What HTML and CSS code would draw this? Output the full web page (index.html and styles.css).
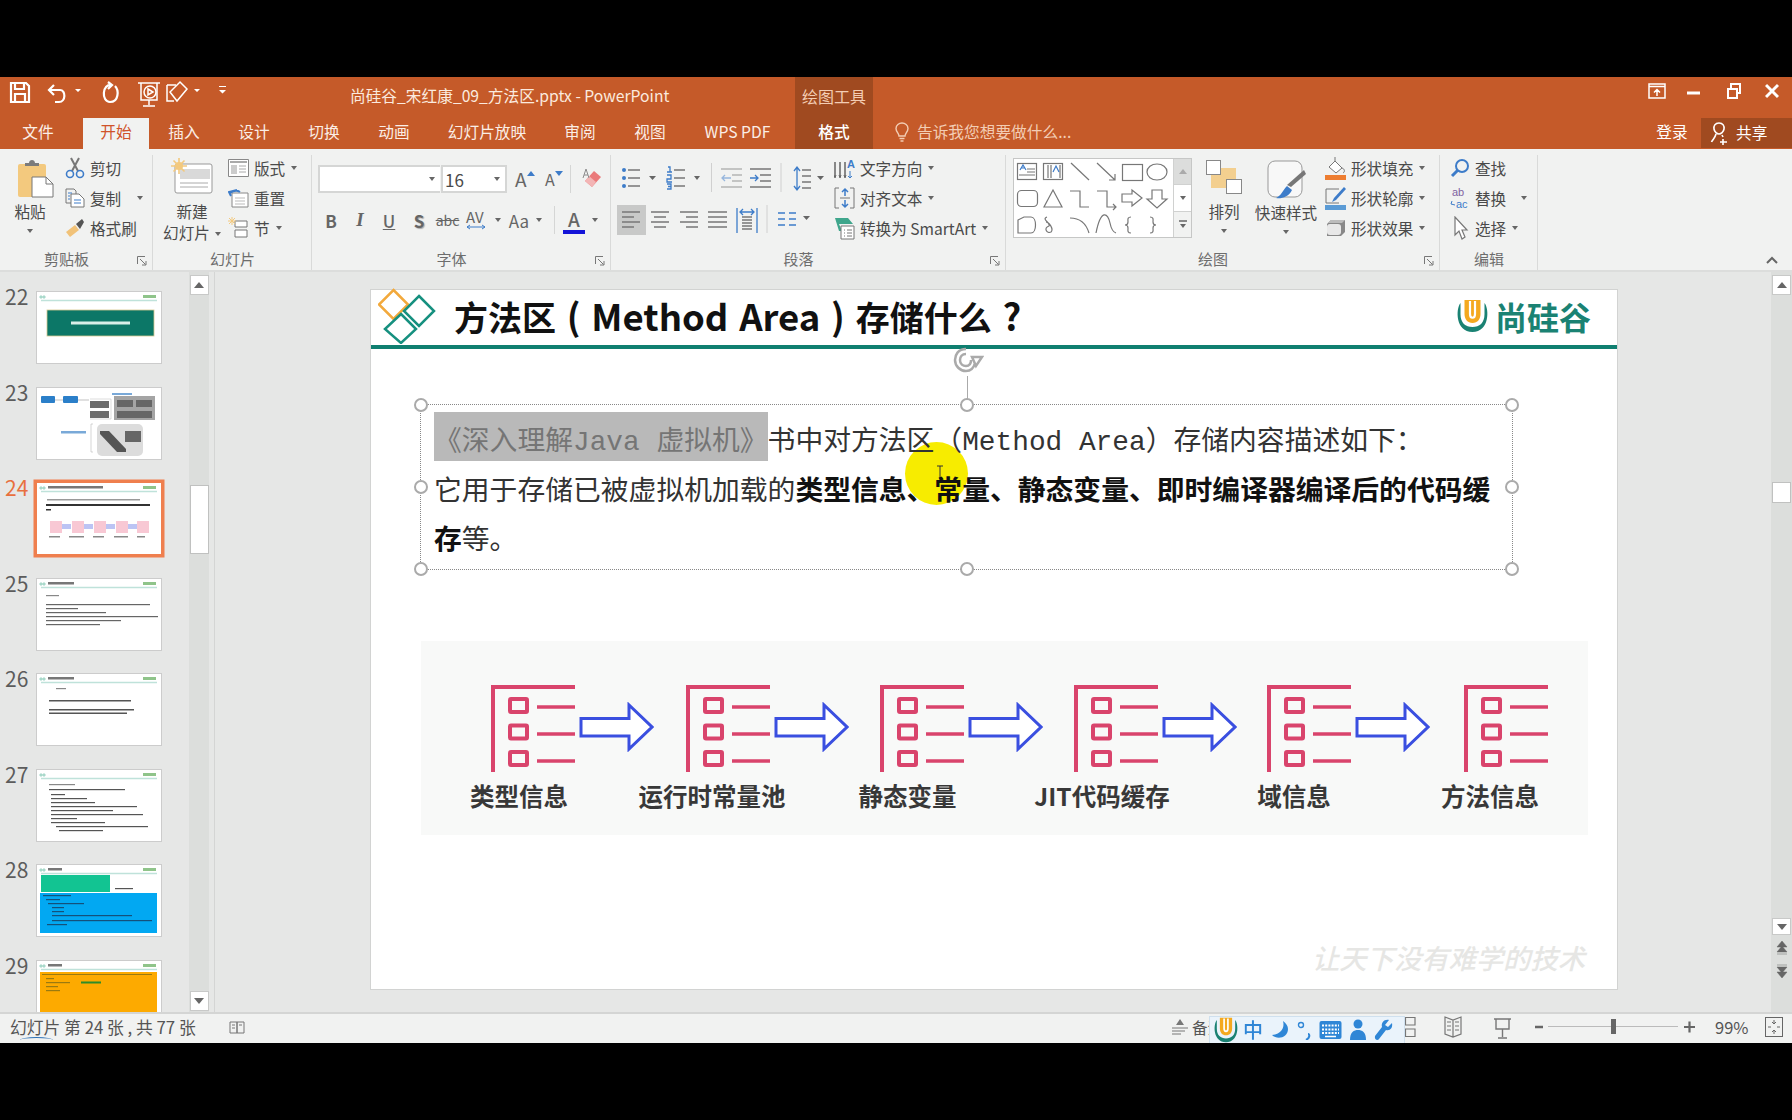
FILE: index.html
```html
<!DOCTYPE html>
<html lang="zh-CN">
<head>
<meta charset="utf-8">
<title>尚硅谷_宋红康_09_方法区.pptx - PowerPoint</title>
<link rel="stylesheet" href="styles.css">
</head>
<body>
<svg class="defs" width="0" height="0">
  <symbol id="list" viewBox="0 0 84 88">
    <path d="M2 88V3H84" fill="none" stroke="#d9446c" stroke-width="4"/>
    <g fill="none" stroke="#d9446c" stroke-width="4">
      <rect x="19" y="15" width="17" height="13" rx="1"/>
      <rect x="19" y="41.5" width="17" height="13" rx="1"/>
      <rect x="19" y="68" width="17" height="13" rx="1"/>
    </g>
    <path d="M46 23H84M46 50H84M46 77H84" stroke="#d9446c" stroke-width="3.5"/>
  </symbol>
  <symbol id="arrow" viewBox="0 0 75 50">
    <path d="M2 16.500H50V3L73 25L50 47V34H2Z" fill="#fff" stroke="#3a4fe0" stroke-width="3"/>
  </symbol>
  <symbol id="ulogo" viewBox="0 0 34 34">
    <path d="M5 4C0 10 0 33 17 33C34 33 34 10 29 4V15C29 24 24 28 17 28C10 28 5 24 5 15Z" fill="#1a8273"/>
    <path d="M9 1H25V15C25 20 22 24 17 24C12 24 9 20 9 15Z" fill="#f4a91f"/>
    <path d="M14.500 2V15C14.500 20 19.500 20 19.500 15V2" fill="none" stroke="#fff" stroke-width="2.200"/>
  </symbol>
  <symbol id="thead" viewBox="0 0 124 71">
    <path d="M4 8.500H120" stroke="#bfe2da" stroke-width="1.500"/>
    <path d="M4 3l2 2-2 2-2-2zM7 3l2 2-2 2-2-2z" fill="#a9d9cb"/>
    <rect x="106" y="3" width="13" height="3" fill="#8fc48a"/>
  </symbol>
  <symbol id="launch" viewBox="0 0 10 10">
    <path d="M.5 8V.5H8M3 3l5.500 5.500M9 5v4H5" fill="none" stroke="#777" stroke-width="1"/>
  </symbol>
</svg>

<div class="app">
  <header class="titlebar">
    <svg class="qat" width="350" height="41" viewBox="0 0 350 41">
      <g fill="none" stroke="#fff" stroke-width="2.200">
        <path d="M11 6H26L29 9V25H11ZM15 6V12H24V6M15 25V17H25V25"/>
        <path d="M54 8L49 13L54 18M50 13H60C66 13 66 25 59 25H55"/>
        <path d="M112 8C102 6 101 25 110 25C119 25 119 13 115 9M108 5L112 8L108 12"/>
        <g stroke-width="1.500">
          <path d="M138 6H160M141 6V23H157V6M149 23V28M143 29H155"/>
          <circle cx="150" cy="15" r="6"/>
          <path d="M148 12L153 15L148 18Z"/>
          <path d="M167 8H176M167 8V24H174"/>
          <path d="M180 5L187 12L177 24L170 15Z"/>
        </g>
      </g>
      <path d="M75 12H81L78 15ZM194 12H200L197 15ZM219 13H226L222.500 16.500ZM219 9H226V10H219Z" fill="#fff"/>
    </svg>
    <div class="doctitle">尚硅谷_宋红康_09_方法区.pptx - PowerPoint</div>
    <div class="ctx-head">绘图工具</div>
    <div class="winbtns">
      <svg width="18" height="16" viewBox="0 0 18 16"><path d="M1 1H17V15H1ZM1 3.500H17M9 13V7M6 9.500L9 6.500L12 9.500" fill="none" stroke="#fff" stroke-width="1.500"/></svg>
      <svg class="w-min" width="13" height="16" viewBox="0 0 13 16"><path d="M0 10H13" stroke="#fff" stroke-width="3"/></svg>
      <svg class="w-res" width="14" height="16" viewBox="0 0 14 16"><path d="M1 6H10V15H1ZM4 5V1H13V10H10" fill="none" stroke="#fff" stroke-width="2"/></svg>
      <svg class="w-close" width="14" height="16" viewBox="0 0 14 16"><path d="M1 2L13 14M13 2L1 14" stroke="#fff" stroke-width="3"/></svg>
    </div>
  </header>

  <nav class="tabs">
    <span class="tab t-file">文件</span>
    <span class="tab t-active">开始</span>
    <span class="tab">插入</span>
    <span class="tab">设计</span>
    <span class="tab">切换</span>
    <span class="tab">动画</span>
    <span class="tab t-show">幻灯片放映</span>
    <span class="tab">审阅</span>
    <span class="tab">视图</span>
    <span class="tab t-wps">WPS PDF</span>
    <span class="tab t-ctx">格式</span>
    <div class="tellme">
      <svg width="14" height="20" viewBox="0 0 14 20"><path d="M4 14C4 11 1 10 1 6.500C1 3 4 1 7 1C10 1 13 3 13 6.500C13 10 10 11 10 14ZM4.500 16.500H9.500M5.500 19H8.500" fill="none" stroke="#f3cdb4" stroke-width="1.400"/></svg>
      <span>告诉我您想要做什么...</span>
    </div>
    <span class="signin">登录</span>
    <div class="share">
      <svg width="20" height="24" viewBox="0 0 20 24"><path d="M9 2C13 2 14.500 5 14 8C13.500 11 11 13 9 13C7 13 4.500 11 4 8C3.500 5 5 2 9 2ZM6 13C5 17 3 18 1.500 21M12 14L13 16M13 18V24M10 21H17" fill="none" stroke="#fff" stroke-width="1.600"/></svg>
      <span>共享</span>
    </div>
  </nav>

  <section class="ribbon">
    <div class="group g-clip">
      <div class="gbody">
        <div class="big b-paste">
          <svg width="36" height="39" viewBox="0 0 36 39">
            <rect x="0" y="5" width="28" height="33" rx="2" fill="#f3c97e"/>
            <path d="M7 7V4H11C11 0 17 0 17 4H21V7Z" fill="#7b7b7b"/>
            <path d="M14 18H28L35 25V38H14Z" fill="#fff" stroke="#777"/>
            <path d="M28 18V25H35" fill="none" stroke="#777"/>
          </svg>
          <span class="biglabel bl-paste">粘贴</span>
          <i class="dd"></i>
        </div>
        <div class="stack s-clip">
          <div class="rrow">
            <svg width="20" height="22" viewBox="0 0 20 22"><path d="M6 1L13 14M14 1L7 14" stroke="#777" stroke-width="2"/><circle cx="5" cy="17" r="3.500" fill="none" stroke="#3d7cc9" stroke-width="1.600"/><circle cx="15" cy="17" r="3.500" fill="none" stroke="#3d7cc9" stroke-width="1.600"/></svg>
            <span>剪切</span>
          </div>
          <div class="rrow">
            <svg width="20" height="20" viewBox="0 0 20 20"><path d="M1 1H9L11 3V6M1 1V15H6" fill="none" stroke="#777"/><path d="M6 6H14L19 11V19H6Z" fill="#fff" stroke="#777"/><path d="M3 5H7M3 8H5M3 11H5M9 12H16M9 15H16" stroke="#3d7cc9"/></svg>
            <span>复制</span><i class="dd dd-copy"></i>
          </div>
          <div class="rrow">
            <svg width="20" height="20" viewBox="0 0 20 20"><path d="M1 14L10 7L14 12L5 19Z" fill="#f1c278"/><path d="M11 6L17 1L19 4L15 11Z" fill="#555"/></svg>
            <span>格式刷</span>
          </div>
        </div>
      </div>
      <div class="glabel"><span>剪贴板</span><svg class="launch" width="10" height="10"><use href="#launch"/></svg></div>
    </div>

    <div class="group g-slide">
      <div class="gbody">
        <div class="big b-new">
          <svg width="42" height="36" viewBox="0 0 42 36">
            <rect x="4" y="6" width="37" height="29" rx="2" fill="#fff" stroke="#999"/>
            <rect x="9" y="11" width="30" height="10" fill="#d9d9d9"/>
            <path d="M9 25H37M9 29H37" stroke="#aaa"/>
            <path d="M8 0V16M0 8H16M2.500 2.500L13.500 13.500M13.500 2.500L2.500 13.500" stroke="#f3c97e" stroke-width="1.600"/>
            <circle cx="8" cy="8" r="4" fill="#f3c97e"/>
          </svg>
          <span class="biglabel bl-new">新建</span>
          <span class="biglabel">幻灯片<i class="dd dd-in"></i></span>
        </div>
        <div class="stack s-slide">
          <div class="rrow">
            <svg width="21" height="18" viewBox="0 0 21 18"><path d="M.5.500H20.500V17.500H.5Z" fill="#fff" stroke="#888"/><path d="M2 3H19" stroke="#aaa" stroke-width="2"/><rect x="3" y="6" width="6" height="9" fill="#ccc"/><path d="M11 7H18M11 10H18M11 13H18" stroke="#aaa"/></svg>
            <span>版式</span><i class="dd"></i>
          </div>
          <div class="rrow">
            <svg width="21" height="19" viewBox="0 0 21 19"><path d="M4 4H20V18H4Z" fill="#fff" stroke="#888"/><path d="M7 9H17M7 12H17M7 15H17" stroke="#bbb"/><path d="M3 7L1 3L9 1M2 4C5 2 9 1 12 3" fill="none" stroke="#3d7cc9" stroke-width="2"/></svg>
            <span>重置</span>
          </div>
          <div class="rrow">
            <svg width="21" height="22" viewBox="0 0 21 22"><path d="M7 4H19V10H7ZM7 13H19V20H7Z" fill="#fff" stroke="#777"/><path d="M4 0V8M0 4H8M1 1L7 7M7 1L1 7" stroke="#f3c97e"/></svg>
            <span>节</span><i class="dd"></i>
          </div>
        </div>
      </div>
      <div class="glabel"><span>幻灯片</span></div>
    </div>

    <div class="group g-font">
      <div class="gbody col">
        <div class="fontrow1">
          <div class="input in-name"><i class="dd"></i></div>
          <div class="input in-size"><span>16</span><i class="dd"></i></div>
          <span class="grow">A<svg width="8" height="6" viewBox="0 0 8 6"><path d="M0 5L4 0L8 5Z" fill="#3d7cc9"/></svg></span>
          <span class="shrink">A<svg width="8" height="6" viewBox="0 0 8 6"><path d="M0 0L4 5L8 0Z" fill="#3d7cc9"/></svg></span>
          <i class="vsep vs-a"></i>
          <svg class="eraser" width="20" height="24" viewBox="0 0 20 24"><path d="M3 14L12 4L19 10L10 20Z" fill="#ea7a7a"/><path d="M3 14L7 9L14 15L10 20Z" fill="#f3b5b5"/><path d="M1 11L4 2L7 11M2 8H6" fill="none" stroke="#8c8c8c"/></svg>
        </div>
        <div class="fontrow2">
          <b class="fb">B</b>
          <i class="fi">I</i>
          <span class="fu">U</span>
          <b class="fs">S</b>
          <span class="fabc">abc</span>
          <span class="fav">AV<svg width="20" height="6" viewBox="0 0 20 6"><path d="M1 3H19M4 1L1 3L4 5M16 1L19 3L16 5" fill="none" stroke="#3d7cc9"/></svg></span>
          <i class="dd"></i>
          <span class="faa">Aa</span>
          <i class="dd"></i>
          <i class="vsep"></i>
          <span class="fcolor">A</span>
          <i class="dd"></i>
        </div>
      </div>
      <div class="glabel"><span>字体</span><svg class="launch" width="10" height="10"><use href="#launch"/></svg></div>
    </div>

    <div class="group g-para">
      <div class="gbody">
        <svg class="para-icons" width="219" height="101" viewBox="611 149 219 101">
          <rect x="617" y="205" width="29" height="30" fill="#c8c9c8"/>
          <g stroke="#777" stroke-width="1.500" fill="none">
            <path d="M628 170H640M628 178H640M628 186H640"/>
            <path d="M674 170H685M674 178H685M674 186H685"/>
            <path d="M732 175H742M732 181H742M721 169H742M721 187H742" opacity=".5"/>
            <path d="M760 175H771M760 181H771M750 169H771M750 187H771"/>
            <path d="M802 170H811M802 176H811M802 182H811M802 188H811" />
            <path d="M622 212H640M622 217H634M622 222H640M622 227H634"/>
            <path d="M651 212H669M654 217H666M651 222H669M654 227H666"/>
            <path d="M680 212H698M686 217H698M680 222H698M686 227H698"/>
            <path d="M708 212H727M708 217H727M708 222H727M708 227H727"/>
            <path d="M742 217H752M742 220H752M742 223H752M742 226H752M742 229H752"/>
          </g>
          <g fill="#3d7cc9">
            <circle cx="624" cy="170" r="2"/><circle cx="624" cy="178" r="2"/><circle cx="624" cy="186" r="2"/>
          </g>
          <g fill="none" stroke="#3d7cc9" stroke-width="1.300">
            <path d="M668 167H670V172M667 172H672M667 175H671V179H667V182H672M667 184H671V189H667M668 186.500H671"/>
            <path d="M722 178H731M725 175L722 178L725 181" opacity=".5"/>
            <path d="M750 178H758M755 175L758 178L755 181"/>
            <path d="M797 168V189M794 171L797 167L800 171M794 186L797 190L800 186"/>
            <path d="M737 208V233M757 208V233M740 212H754M743 209L740 212L743 215M751 209L754 212L751 215"/>
            <path d="M778 213H785M789 213H796M778 219H785M789 219H796M778 225H785M789 225H796"/>
          </g>
          <path d="M649 176H656L652.500 180ZM694 176H700L697 180ZM817 176H824L820.500 180ZM803 216H810L806.500 220Z" fill="#666"/>
          <path d="M711.500 163V192M781 163V192M767 205V233" stroke="#d0d0d0"/>
        </svg>
        <div class="stack s-para">
          <div class="rrow">
            <svg width="21" height="24" viewBox="0 0 21 24"><path d="M1 6V21M6 6V21M11 6V21" stroke="#666" stroke-width="1.500"/><path d="M0 19L1 22L2 19M5 19L6 22L7 19M10 19L11 22L12 19" fill="none" stroke="#666"/><text class="svgA" x="13" y="12">A</text><path d="M16 15V22M14 20L16 22L18 20" fill="none" stroke="#3d7cc9"/></svg>
            <span>文字方向</span><i class="dd"></i>
          </div>
          <div class="rrow">
            <svg width="21" height="24" viewBox="0 0 21 24"><path d="M5 2H1V22H5M16 2H20V22H16" fill="none" stroke="#777"/><path d="M11 3V10M8 6L11 3L14 6M11 14V21M8 18L11 21L14 18" fill="none" stroke="#3d7cc9" stroke-width="1.500"/><path d="M6 12H16" stroke="#777"/></svg>
            <span>对齐文本</span><i class="dd"></i>
          </div>
          <div class="rrow">
            <svg width="21" height="24" viewBox="0 0 21 24"><path d="M1 2H14L19 8H5L8 15H5Z" fill="#3fa68c"/><path d="M7 10H20V23H7Z" fill="#fff" stroke="#777"/><path d="M10 14H11M13 14H18M10 17H11M13 17H18M10 20H11M13 20H18" stroke="#777"/></svg>
            <span>转换为 SmartArt</span><i class="dd"></i>
          </div>
        </div>
      </div>
      <div class="glabel"><span>段落</span><svg class="launch" width="10" height="10"><use href="#launch"/></svg></div>
    </div>

    <div class="group g-draw">
      <div class="gbody">
        <div class="gallery">
          <svg width="160" height="80" viewBox="0 0 160 80">
            <g fill="none" stroke="#777" stroke-width="1.200">
              <rect x="4.500" y="5.500" width="19" height="16"/>
              <rect x="30.500" y="5.500" width="19" height="16"/>
              <path d="M14 11H22M14 14H22M6 17H22M35 7V20M38 7V20M47 7V20"/>
              <path d="M58 5L76 22"/>
              <path d="M84 5L102 22M102 16V22H96"/>
              <rect x="109.500" y="6.500" width="20" height="16"/>
              <ellipse cx="144" cy="14" rx="10" ry="8"/>
              <rect x="4.500" y="32.500" width="20" height="16" rx="4"/>
              <path d="M40 32L49 49H31Z"/>
              <path d="M57 33H67V49H76"/>
              <path d="M84 33H94V49H103M100 46L103 49L100 52"/>
              <path d="M109 36H119V32L129 40L119 48V44H109Z"/>
              <path d="M139 32H149V41H154L144 50L134 41H139Z"/>
              <path d="M5 62L11 59H18C24 59 24 75 18 75H5Z"/>
              <path d="M34 59C28 61 38 65 36 68C30 70 34 76 38 74C41 71 36 64 33 64"/>
              <path d="M57 60C66 60 73 65 76 75"/>
              <path d="M83 75C88 50 95 55 97 65C98 70 100 74 103 75"/>
              <path d="M118 59C114 59 115 62 115 64C115 66 114 67 112 67C114 67 115 68 115 70C115 72 114 75 118 75"/>
              <path d="M137 59C141 59 140 62 140 64C140 66 141 67 143 67C141 67 140 68 140 70C140 72 141 75 137 75"/>
            </g>
            <g fill="none" stroke="#3d7cc9" stroke-width="1.200"><path d="M7 12L10 7L13 12M8 10H12"/><path d="M40 14L43 8L46 14"/></g>
          </svg>
          <div class="gal-scroll">
            <span class="gs gs-up"><i class="up"></i></span>
            <span class="gs"><i class="dd"></i></span>
            <span class="gs gs-more"><i class="more"></i><i class="dd"></i></span>
          </div>
        </div>
        <div class="big b-arr">
          <svg width="36" height="34" viewBox="0 0 36 34"><rect x="5" y="8" width="25" height="20" fill="#f3cf8f"/><rect x=".5" y=".5" width="14" height="14" fill="#fff" stroke="#888"/><rect x="20.500" y="19.500" width="15" height="14" fill="#fff" stroke="#888"/></svg>
          <span class="biglabel bl-draw">排列</span>
          <i class="dd"></i>
        </div>
        <div class="big b-style">
          <svg width="40" height="40" viewBox="0 0 40 40"><rect x="1" y="1" width="34" height="36" rx="7" fill="#f8f8f8" stroke="#999"/><path d="M37 10L39 14L24 27L20 25Z" fill="#777"/><path d="M20 26L25 30C22 37 14 39 9 38C14 36 16 30 20 26Z" fill="#3d7cc9"/></svg>
          <span class="biglabel bl-style">快速样式</span>
          <i class="dd"></i>
        </div>
        <div class="stack s-shape">
          <div class="rrow">
            <svg width="21" height="24" viewBox="0 0 21 24"><path d="M10 1V6M4 11L10 5L17 12L11 17Z" fill="#fff" stroke="#777"/><path d="M17 12C20 13 20 16 18 17" fill="none" stroke="#777"/><rect y="19" width="21" height="5" fill="#ed7d31"/></svg>
            <span>形状填充</span><i class="dd"></i>
          </div>
          <div class="rrow">
            <svg width="21" height="24" viewBox="0 0 21 24"><path d="M1 3H14M1 3V17H14" fill="none" stroke="#777"/><path d="M19 1L21 3L11 14L7 16L9 12Z" fill="#3d7cc9"/><rect y="19" width="21" height="5" fill="#5b9bd5"/></svg>
            <span>形状轮廓</span><i class="dd"></i>
          </div>
          <div class="rrow">
            <svg width="21" height="20" viewBox="0 0 21 20"><path d="M6 2H20V14L16 18H2V6Z" fill="#888"/><path d="M6 2H20L17 5H3Z" fill="#bbb"/><rect x="2" y="6" width="14" height="11" rx="3" fill="#e8e8e8"/></svg>
            <span>形状效果</span><i class="dd"></i>
          </div>
        </div>
      </div>
      <div class="glabel"><span>绘图</span><svg class="launch" width="10" height="10"><use href="#launch"/></svg></div>
    </div>

    <div class="group g-edit">
      <div class="gbody">
        <div class="stack s-edit">
          <div class="rrow">
            <svg width="20" height="20" viewBox="0 0 20 20"><circle cx="12" cy="8" r="6" fill="none" stroke="#3d7cc9" stroke-width="2"/><path d="M8 12L2 18" stroke="#3d7cc9" stroke-width="3"/></svg>
            <span>查找</span>
          </div>
          <div class="rrow">
            <svg width="20" height="24" viewBox="0 0 20 24"><text class="svgab" x="2" y="10">ab</text><text class="svgac" x="6" y="22">ac</text><path d="M2 15L1 18L5 19" fill="none" stroke="#3d7cc9"/></svg>
            <span>替换</span><i class="dd dd-rep"></i>
          </div>
          <div class="rrow">
            <svg width="20" height="24" viewBox="0 0 20 24"><path d="M5 1V19L9 15L12 23L15 21L12 14H17Z" fill="#fff" stroke="#777" stroke-width="1.200"/></svg>
            <span>选择</span><i class="dd"></i>
          </div>
        </div>
      </div>
      <div class="glabel"><span>编辑</span></div>
    </div>

    <div class="collapse">
      <svg width="14" height="9" viewBox="0 0 14 9"><path d="M2 7L7 2L12 7" fill="none" stroke="#666" stroke-width="2"/></svg>
    </div>
  </section>

  <main class="workspace">
    <aside class="thumbs">
      <div class="thumb-list">
        <div class="trow"><span class="tnum">22</span>
          <svg class="thumb" viewBox="0 0 124 71"><g class="tblur"><use href="#thead" width="124" height="71"/><rect x="10" y="18" width="107" height="26" fill="#0c7767" stroke="#d8c890" stroke-width=".8"/><rect x="34" y="29.500" width="59" height="3" fill="#d9efe8"/></g></svg>
        </div>
        <div class="trow"><span class="tnum">23</span>
          <svg class="thumb" viewBox="0 0 124 71"><g class="tblur"><rect x="4" y="8" width="14" height="7" rx="1" fill="#2b7fc9"/><rect x="26" y="8" width="15" height="7" rx="1" fill="#2b7fc9"/><path d="M18 12H26M41 12H52" stroke="#999" stroke-width=".6"/><rect x="75" y="5" width="20" height="2" fill="#79a9d8"/><rect x="53" y="13" width="19" height="7" fill="#6c6c6c"/><rect x="53" y="23" width="19" height="7" fill="#6c6c6c"/><rect x="77" y="8" width="41" height="24" fill="#a4a4a4"/><rect x="80" y="12" width="16" height="7" fill="#666"/><rect x="99" y="12" width="16" height="7" fill="#666"/><rect x="80" y="23" width="35" height="7" fill="#666"/><path d="M53 11H74V31H53" fill="none" stroke="#bbb" stroke-width=".5"/><rect x="60" y="36" width="46" height="32" rx="5" fill="#dcdcdc"/><path d="M63 43H72L89 61V64H80L63 46Z" fill="#555"/><rect x="88" y="43" width="16" height="11" fill="#666"/><rect x="24" y="43" width="25" height="2.500" fill="#79a9d8"/><path d="M56 36H54V64H56" fill="none" stroke="#bbb" stroke-width=".6"/></g></svg>
        </div>
        <div class="trow trow-sel"><span class="tnum">24</span>
          <svg class="thumb" viewBox="0 0 124 71"><g class="tblur"><use href="#thead" width="124" height="71"/><rect x="11" y="3" width="55" height="2.500" fill="#777"/><rect x="10" y="16" width="93" height="1.500" fill="#999"/><rect x="9" y="21" width="104" height="2" fill="#333"/><rect x="9" y="26" width="5" height="1.500" fill="#333"/><g fill="#f8c8d4"><rect x="13" y="38" width="12" height="12"/><rect x="35" y="38" width="12" height="12"/><rect x="57" y="38" width="12" height="12"/><rect x="79" y="38" width="12" height="12"/><rect x="100" y="38" width="12" height="12"/></g><g fill="#bcc4f4"><rect x="25" y="41" width="9" height="5"/><rect x="47" y="41" width="9" height="5"/><rect x="69" y="41" width="9" height="5"/><rect x="91" y="41" width="9" height="5"/></g><g fill="#888"><rect x="12" y="53" width="11" height="1.500"/><rect x="32" y="53" width="15" height="1.500"/><rect x="56" y="53" width="11" height="1.500"/><rect x="77" y="53" width="14" height="1.500"/><rect x="100" y="53" width="8" height="1.500"/></g></g></svg>
        </div>
        <div class="trow"><span class="tnum">25</span>
          <svg class="thumb" viewBox="0 0 124 71"><g class="tblur"><use href="#thead" width="124" height="71"/><rect x="11" y="3" width="26" height="2.500" fill="#777"/><rect x="9" y="16" width="13" height="1.200" fill="#888"/><g fill="#666"><rect x="9" y="25" width="104" height="1.200"/><rect x="9" y="29" width="32" height="1.200"/><rect x="9" y="33" width="60" height="1.200"/><rect x="9" y="37" width="112" height="1.200"/><rect x="9" y="41" width="75" height="1.200"/><rect x="9" y="45" width="54" height="1.200"/></g></g></svg>
        </div>
        <div class="trow"><span class="tnum">26</span>
          <svg class="thumb" viewBox="0 0 124 71"><g class="tblur"><use href="#thead" width="124" height="71"/><rect x="11" y="3" width="26" height="2.500" fill="#777"/><rect x="19" y="14" width="10" height="1.200" fill="#888"/><g fill="#555"><rect x="12" y="26" width="82" height="1.500"/><rect x="12" y="35" width="85" height="1.500"/><rect x="12" y="38.500" width="78" height="1.500"/></g></g></svg>
        </div>
        <div class="trow"><span class="tnum">27</span>
          <svg class="thumb" viewBox="0 0 124 71"><g class="tblur"><use href="#thead" width="124" height="71"/><rect x="12" y="14" width="26" height="1.200" fill="#888"/><g fill="#555"><rect x="12" y="19" width="76" height="1.200"/><rect x="14" y="24" width="14" height="1.200"/><rect x="14" y="28" width="36" height="1.200"/><rect x="14" y="32" width="44" height="1.200"/><rect x="14" y="36" width="86" height="1.200"/><rect x="14" y="40" width="62" height="1.200"/><rect x="14" y="44" width="92" height="1.200"/><rect x="14" y="48" width="26" height="1.200"/><rect x="14" y="52" width="54" height="1.200"/><rect x="19" y="56" width="92" height="1.200"/><rect x="22" y="60" width="44" height="1.200"/></g></g></svg>
        </div>
        <div class="trow"><span class="tnum">28</span>
          <svg class="thumb" viewBox="0 0 124 71"><g class="tblur"><use href="#thead" width="124" height="71"/><rect x="11" y="3" width="14" height="2.500" fill="#777"/><rect x="4" y="10" width="69" height="17" fill="#12c492"/><rect x="3" y="28" width="117" height="40" fill="#02a8f2"/><rect x="78" y="23" width="18" height="1.200" fill="#555"/><g fill="#14507a"><rect x="6" y="30" width="28" height="1.200"/><rect x="9" y="34" width="14" height="1.200"/><rect x="11" y="38" width="36" height="1.200"/><rect x="15" y="42" width="12" height="1.200"/><rect x="15" y="46" width="12" height="1.200"/><rect x="15" y="50" width="80" height="1.200"/><rect x="15" y="55" width="100" height="1.200"/><rect x="10" y="59" width="20" height="1.200"/></g></g></svg>
        </div>
        <div class="trow"><span class="tnum">29</span>
          <svg class="thumb" viewBox="0 0 124 71"><g class="tblur"><use href="#thead" width="124" height="71"/><rect x="11" y="3" width="14" height="2.500" fill="#777"/><rect x="3" y="11" width="117" height="58" fill="#fdaa00"/><g fill="#9a7a10"><rect x="5" y="13" width="110" height="1"/><rect x="9" y="17" width="8" height="1.200"/><rect x="9" y="21" width="24" height="1.200"/><rect x="9" y="25" width="12" height="1.200"/><rect x="9" y="29" width="14" height="1.200"/></g><rect x="44" y="20.500" width="20" height="2" fill="#2d8c2a"/></g></svg>
        </div>
      </div>
      <div class="vscroll vs-left">
        <span class="sbtn"><i class="up"></i></span>
        <span class="sthumb st-left"></span>
        <span class="spacer"></span>
        <span class="sbtn"><i class="down"></i></span>
      </div>
    </aside>

    <div class="canvas">
      <article class="slide">
        <div class="slide-head">
          <svg class="diamonds" width="58" height="56" viewBox="0 0 58 56">
            <g fill="none" stroke-width="2.500">
              <path d="M15.500 2L30 16.500L15.500 31L1 16.500Z" stroke="#f2a93c"/>
              <path d="M41 8L56 23L41 38L26 23Z" stroke="#16907f"/>
              <path d="M23 26L38 41L23 55L7 41Z" stroke="#16907f"/>
            </g>
          </svg>
          <h1 class="slide-title">方法区<span class="lat"> ( Method Area ) </span>存储什么<span class="lat"> ?</span></h1>
          <div class="brand">
            <svg width="35" height="34"><use href="#ulogo"/></svg>
            <span>尚硅谷</span>
          </div>
        </div>

        <div class="textbox">
          <i class="h h-tl"></i><i class="h h-tc"></i><i class="h h-tr"></i>
          <i class="h h-ml"></i><i class="h h-mr"></i>
          <i class="h h-bl"></i><i class="h h-bc"></i><i class="h h-br"></i>
          <i class="rotline"></i>
          <svg class="rothandle" width="32" height="30" viewBox="0 0 32 30"><path d="M14 3C6 3 3 9 3 14C3 20 8 25 14 25C19 25 22 21 23 17M14 8C10 8 8 11 8 14C8 18 11 20 14 20C17 20 19 18 19 14M20 11L30 11L24 20Z" fill="none" stroke="#aaa" stroke-width="2.500"/></svg>
          <i class="pointer"></i>
          <p class="body-text"><span class="sel">《深入理解Java 虚拟机》</span>书中对方法区（Method Area）存储内容描述如下：<br>它用于存储已被虚拟机加载的<b>类型信息、常量、静态变量、即时编译器编译后的代码缓<br>存</b>等。</p>
          <svg class="ibeam" width="8" height="18" viewBox="0 0 8 18"><path d="M1 1H7M4 1V17M1 17H7" stroke="#333" fill="none"/></svg>
        </div>

        <div class="diagram">
          <div class="d-icons">
            <svg class="d-i" viewBox="0 0 84 88"><use href="#list"/></svg><svg class="d-a" viewBox="0 0 75 50"><use href="#arrow"/></svg>
            <svg class="d-i" viewBox="0 0 84 88"><use href="#list"/></svg><svg class="d-a" viewBox="0 0 75 50"><use href="#arrow"/></svg>
            <svg class="d-i" viewBox="0 0 84 88"><use href="#list"/></svg><svg class="d-a" viewBox="0 0 75 50"><use href="#arrow"/></svg>
            <svg class="d-i" viewBox="0 0 84 88"><use href="#list"/></svg><svg class="d-a" viewBox="0 0 75 50"><use href="#arrow"/></svg>
            <svg class="d-i" viewBox="0 0 84 88"><use href="#list"/></svg><svg class="d-a" viewBox="0 0 75 50"><use href="#arrow"/></svg>
            <svg class="d-i" viewBox="0 0 84 88"><use href="#list"/></svg>
          </div>
          <div class="d-labels">
            <span>类型信息</span><span>运行时常量池</span><span>静态变量</span><span>JIT代码缓存</span><span>域信息</span><span>方法信息</span>
          </div>
        </div>

        <div class="watermark">让天下没有难学的技术</div>
      </article>
    </div>

    <div class="vscroll vs-right">
      <span class="sbtn"><i class="up"></i></span>
      <span class="sthumb st-right"></span>
      <span class="spacer"></span>
      <span class="sbtn sb-down"><i class="down"></i></span>
      <svg class="pg" width="12" height="14" viewBox="0 0 12 14"><path d="M6 0L11 6H1ZM6 5L11 11H1ZM1 13H11" fill="#666" stroke="#666" stroke-width=".5"/></svg>
      <svg class="pg" width="12" height="14" viewBox="0 0 12 14"><path d="M1 1H11M6 14L11 8H1ZM6 9L11 3H1Z" fill="#666" stroke="#666" stroke-width=".5"/></svg>
    </div>
  </main>

  <footer class="status">
    <span class="st-text">幻灯片 第 24 张 , 共 77 张</span>
    <svg class="st-spell" width="16" height="14" viewBox="0 0 16 14"><path d="M8 2H1V13H8ZM8 2H15V13H8ZM3 5H6M3 8H6M10 5H13" fill="none" stroke="#777"/></svg>
    <svg class="st-notes" width="18" height="20" viewBox="0 0 18 20"><path d="M1 11H17M1 14H14M1 17H10" stroke="#777"/><path d="M9 2L13 8H5Z" fill="#777"/></svg>
    <span class="st-note-text">备注</span>
    <svg class="st-views" width="295" height="31" viewBox="1405 1012 295 31">
      <path d="M1405.500 1018.500H1415V1026H1405.500ZM1405.500 1030H1415V1037.500H1405.500Z" fill="none" stroke="#777" stroke-width="1.200"/>
      <path d="M1445 1018L1453 1021L1461 1018V1035L1453 1038L1445 1035ZM1453 1021V1038M1447 1023H1451M1447 1027H1451M1447 1031H1451M1455 1023H1459M1455 1027H1459M1455 1031H1459" fill="none" stroke="#777" stroke-width="1.200"/>
      <path d="M1494 1020H1511M1496 1020V1030H1509V1020M1502.500 1030V1038M1498 1039H1507" fill="none" stroke="#777" stroke-width="1.400"/>
      <path d="M1535 1028H1543" stroke="#666" stroke-width="2.500"/>
      <path d="M1548 1027.500H1678" stroke="#bbb" stroke-width="1"/>
      <rect x="1611" y="1020" width="5" height="15" fill="#666"/>
      <path d="M1684 1028H1695M1689.500 1022.500V1033.500" stroke="#666" stroke-width="2.200"/>
    </svg>
    <span class="st-zoom">99%</span>
    <i class="fitbox"><svg width="14" height="16" viewBox="0 0 14 16"><path d="M7 1V5M5 3L7 5L9 3M7 15V11M5 13L7 11L9 13M1 8H4M10 8H13" fill="none" stroke="#666"/></svg></i>
  </footer>

  <i class="arc"></i>
  <div class="ime">
    <svg width="26" height="26"><use href="#ulogo"/></svg>
    <span class="ime-zh">中</span>
    <svg width="18" height="20" viewBox="0 0 18 20"><path d="M12 1C14 8 10 14 1 15C6 20 17 18 17 9C17 6 15 3 12 1Z" fill="#2f86d6"/></svg>
    <svg width="14" height="20" viewBox="0 0 14 20"><circle cx="4" cy="5" r="2.500" fill="none" stroke="#2f86d6" stroke-width="1.400"/><path d="M11 14C13 14 13 18 9 20" fill="none" stroke="#2f86d6" stroke-width="2"/></svg>
    <svg width="23" height="20" viewBox="0 0 23 20"><rect x=".5" y="1" width="22" height="18" rx="2" fill="#2f86d6"/><path d="M3 5.500H20M3 9.500H20M3 13H20" stroke="#fff" stroke-width="1.800" stroke-dasharray="2 1.200"/><path d="M6 16.500H17" stroke="#fff" stroke-width="1.500"/></svg>
    <svg width="16" height="22" viewBox="0 0 16 22"><circle cx="8" cy="5" r="4.500" fill="#2f86d6"/><path d="M0 21C0 13 4 11 8 11C12 11 16 13 16 21Z" fill="#2f86d6"/></svg>
    <svg width="19" height="22" viewBox="0 0 19 22"><path d="M18 4L14 8L11 6L15 1C10 0 7 4 8 8L1 17C0 21 4 22 5 20L12 11C16 12 19 9 18 4Z" fill="#2f86d6"/></svg>
  </div>
</div>
</body>
</html>
```

FILE: styles.css
```css
* { box-sizing: border-box; }
html, body { margin: 0; height: 1120px; background: #000; overflow: hidden; }
body { font-family: "Noto Sans CJK SC", "Noto Sans", sans-serif; color: #444; }
.defs { position: absolute; }
i { font-style: normal; }
svg { display: block; flex: none; }

.app { position: relative; margin-top: 77px; height: 966px; display: flex; flex-direction: column; background: #f1f2f1; filter: blur(.45px); }

/* title bar */
.titlebar { height: 41px; display: flex; background: #c55a29; color: #fff; }
.qat { flex: none; }
.doctitle { width: 321px; font-size: 15.700px; line-height: 38px; color: #fbeadf; white-space: nowrap; }
.ctx-head { width: 78px; margin-left: 124px; background: #a04a20; color: #f3cdb4; font-size: 16px; line-height: 38px; text-align: center; }
.winbtns { margin-left: auto; padding: 6px 13px 0 0; display: flex; gap: 24px; height: 27px; }
.winbtns .w-min { margin-left: -3px; }
.winbtns .w-res { margin-left: 3px; }

/* tabs */
.tabs { height: 31px; display: flex; background: #c55a29; color: #fbeee6; font-size: 15.700px; line-height: 28px; text-align: center; }
.tab { width: 70px; flex: none; white-space: nowrap; }
.t-file { margin-left: 3px; }
.t-active { width: 66px; margin-left: 10px; background: #f1f2f1; color: #d0532a; }
.t-show { width: 116px; }
.t-wps { width: 105px; }
.t-ctx { width: 78px; margin-left: 5px; background: #a04a20; color: #fff; font-weight: 500; }
.tellme { margin-left: 22px; display: flex; align-items: center; gap: 8px; color: #f3cdb4; width: 175px; white-space: nowrap; height: 28px; }
.signin { margin-left: auto; color: #fff; width: 32px; }
.share { width: 91px; margin-left: 13px; height: 30px; background: #a04a20; color: #fff; display: flex; align-items: center; gap: 6px; padding-left: 9px; }

/* ribbon */
.ribbon { height: 123px; display: flex; background: #f1f2f1; border-bottom: 2px solid #dcdddc; font-size: 15.600px; color: #4a4a4a; position: relative; }
.group { flex: none; display: flex; flex-direction: column; height: 118px; margin-top: 6px; position: relative; }
.group::after { content: ""; position: absolute; right: 0; top: 0; bottom: 3px; width: 1px; background: #d9dad9; }
.g-clip { width: 153px; }
.g-slide { width: 159px; }
.g-font { width: 299px; }
.g-para { width: 395px; }
.g-draw { width: 434px; }
.g-edit { width: 98px; }
.gbody { height: 97px; display: flex; margin-top: -6px; }
.gbody.col { flex-direction: column; }
.glabel { height: 25px; display: flex; align-items: center; font-size: 15px; color: #6d6d6d; }
.glabel span { flex: 1; text-align: center; }
.launch { margin: 4px 6px 0 4px; }

.dd { display: inline-block; flex: none; width: 0; height: 0; border: 3.500px solid transparent; border-top: 4px solid #666; border-bottom: 0; }
.dd-in { margin-left: 5px; vertical-align: middle; }
.up { display: block; width: 0; height: 0; border: 5px solid transparent; border-bottom: 6px solid #666; border-top: 0; }
.down { display: block; width: 0; height: 0; border: 5px solid transparent; border-top: 6px solid #666; border-bottom: 0; }

.stack { display: flex; flex-direction: column; padding-top: 4px; }
.rrow { height: 30px; display: flex; align-items: center; gap: 5px; white-space: nowrap; }
.rrow .dd { margin-left: 1px; }
.big { display: flex; flex-direction: column; align-items: center; padding-top: 9px; white-space: nowrap; }
.biglabel { line-height: 20.500px; }
.big > .dd { margin-top: 7px; }

.b-paste { width: 40px; margin-left: 13px; }
.bl-paste { margin-top: 3px; margin-right: 6px; }
.b-paste > .dd { margin-right: 6px; }
.b-paste svg { margin-left: 5px; margin-top: 1px; }
.s-clip { margin-left: 12px; }
.dd-copy { margin-left: 11px !important; }

.b-new { width: 62px; margin-left: 8px; }
.bl-new { margin-top: 7px; }
.s-slide { margin-left: 5px; }

.fontrow1 { display: flex; align-items: center; height: 28px; margin: 16px 0 0 6px; }
.input { height: 28px; background: #fff; border: 2px solid #d5d6d5; display: flex; align-items: center; justify-content: flex-end; padding-right: 5px; }
.in-name { width: 122px; border-right: 0; }
.in-size { width: 66px; margin-left: 1px; justify-content: space-between; padding-left: 2px; font-size: 17px; }
.grow, .shrink { display: flex; color: #666; font-size: 17px; line-height: 24px; }
.grow { margin-left: 8px; width: 30px; font-size: 19px; }
.shrink { width: 25px; font-size: 16px; }
.grow svg, .shrink svg { margin: 4px 0 0 0; }
.vs-a { margin-right: 11px; }
.vsep { display: block; width: 1px; height: 28px; background: #d5d6d5; }
.fontrow2 { display: grid; grid-template-columns: 30px 28px 30px 30px 27px 30px 14px 28px 12px 18px 22px 20px; align-items: center; justify-items: center; height: 30px; margin: 12px 0 0 4px; color: #666; font-size: 17px; }
.fb { font-weight: 700; }
.fi { font-family: "Liberation Serif", serif; font-style: italic; font-size: 19px; font-weight: 700; }
.fu { text-decoration: underline; font-weight: 500; }
.fs { text-shadow: 1px 1px 1px #aaa; }
.fabc { font-size: 14px; text-decoration: line-through; }
.fav { font-size: 15px; line-height: 14px; display: block; }
.faa { font-size: 17px; }
.fcolor { width: 22px; text-align: center; font-size: 19px; line-height: 23px; border-bottom: 4px solid #1414d8; font-weight: 500; }

.s-para { margin-left: 4px; }
.svgA { font: 700 11px "Liberation Sans", sans-serif; fill: #3d7cc9; }
.svgab { font: 11px "Liberation Sans", sans-serif; fill: #8064a2; }
.svgac { font: 11px "Liberation Sans", sans-serif; fill: #3d7cc9; }

.gallery { width: 179px; height: 80px; margin: 9px 0 0 7px; display: flex; background: #fff; border: 1px solid #c6c7c6; }
.gallery > svg { width: 160px; margin: -1px 0 0 -1px; }
.gal-scroll { display: flex; flex-direction: column; flex: 1; border-left: 1px solid #d0d1d0; background: #f1f2f1; }
.gs { flex: 1; display: flex; flex-direction: column; gap: 2px; align-items: center; justify-content: center; background: #fff; border-bottom: 1px solid #d0d1d0; }
.gs .up { border-width: 4px; border-bottom-width: 5px; border-top-width: 0; border-bottom-color: #aaa; }
.gs-up { background: #dcdddc; }
.gs-more { background: #f1f2f1; border-bottom: 0; }
.more { display: block; width: 8px; height: 2px; background: #888; }
.b-arr { width: 50px; margin-left: 7px; }
.b-arr svg { margin-top: 2px; }
.bl-draw { margin-top: 7px; }
.b-style { width: 70px; margin-left: 2px; padding-top: 11px; }
.b-style svg { margin-bottom: 2px; margin-left: 2px; }
.s-shape { margin-left: 4px; }
.s-edit { margin-left: 10px; }
.dd-rep { margin-left: 10px !important; }
.collapse { position: absolute; right: 13px; top: 107px; }

/* workspace */
.workspace { height: 740px; display: flex; background: #e6e7e6; overflow: hidden; }
.thumbs { width: 215px; flex: none; display: flex; border-right: 1px solid #d4d5d4; }
.thumb-list { width: 189px; flex: none; padding-top: 20px; display: flex; flex-direction: column; gap: 24.500px; overflow: hidden; }
.trow { display: flex; height: 71px; flex: none; }
.tnum { width: 37px; flex: none; padding-left: 5px; font-size: 21px; line-height: 22px; margin-top: -7px; height: 22px; color: #5c5c5c; }
.thumb { width: 124px; height: 71px; background: #fff; box-shadow: 0 0 0 1px #ccc; }
.tblur { filter: blur(.6px); }
.trow-sel .tnum { color: #e8703e; }
.trow-sel .thumb { box-shadow: 0 0 0 3.500px #ef7f4e; }
.vscroll { width: 20px; flex: none; display: flex; flex-direction: column; align-items: center; background: #dcdedc; padding-top: 3px; }
.sbtn { width: 19px; height: 20px; flex: none; background: #fff; border: 1px solid #c8c9c8; display: flex; align-items: center; justify-content: center; }
.sthumb { width: 19px; flex: none; background: #fff; border: 1px solid #c0c1c0; }
.spacer { flex: 1; }
.st-left { margin-top: 190px; height: 69px; }
.vs-left { padding-bottom: 1px; }
.st-right { margin-top: 187px; height: 21px; }
.vs-right { width: 21px; padding-bottom: 34px; }
.sb-down { height: 17px; }
.pg { margin-top: 6px; }
.pg + .pg { margin-top: 9px; }

.canvas { flex: 1; min-width: 0; padding: 17px 0 0 155px; }
.slide { width: 1248px; height: 701px; background: #fff; border: 1px solid #d2d3d2; display: flex; flex-direction: column; }

.slide-head { height: 59px; flex: none; display: flex; align-items: center; border-bottom: 4px solid #0f7f70; padding-left: 7px; }
.diamonds { margin-top: -3px; }
.slide-title { margin: -2px 0 0 18px; font-size: 34px; font-weight: 700; color: #111; line-height: 54px; white-space: pre; }
.lat { font-size: 36.500px; word-spacing: 2.500px; }
.brand { margin: -3px 26px 0 auto; display: flex; align-items: center; gap: 5px; color: #1a8273; font-size: 32px; font-weight: 700; line-height: 40px; }

.textbox { position: relative; flex: none; width: 1093px; height: 166px; margin: 55px 0 0 49px; border: 1px dotted #888; }
.h { position: absolute; z-index: 3; width: 14px; height: 14px; margin: -7px 0 0 -7px; border-radius: 50%; background: #fff; border: 2.500px solid #aaa; }
.h-tl, .h-tc, .h-tr { top: 0; }
.h-ml, .h-mr { top: 50%; }
.h-bl, .h-bc, .h-br { top: 100%; }
.h-tl, .h-ml, .h-bl { left: 0; }
.h-tc, .h-bc { left: 50%; }
.h-tr, .h-mr, .h-br { left: 100%; }
.rotline { position: absolute; left: 50%; top: -29px; width: 1px; height: 29px; background: #aaa; }
.rothandle { position: absolute; left: 531px; top: -59px; }
.pointer { position: absolute; left: 484px; top: 37px; width: 63px; height: 63px; border-radius: 50%; background: #f7ec00; }
.ibeam { position: absolute; left: 515px; top: 60px; }
.body-text { position: relative; z-index: 1; margin: 13px 0 0 13px; font-family: "Liberation Mono", "Noto Sans CJK SC", monospace; font-size: 27.800px; line-height: 49.500px; color: #333; white-space: pre; }
.body-text b { color: #111; }
.sel { position: relative; display: inline-block; color: #757575; }
.sel::before { content: ""; position: absolute; z-index: -1; left: 0; right: 0; top: -6px; height: 49px; background: #b9b9b9; }

.diagram { flex: none; width: 1167px; height: 194px; margin: 71px 0 0 50px; background: #f8f9f8; }
.d-icons { display: grid; grid-template-columns: 84px 111px 84px 110px 84px 110px 84px 109px 84px 113px 84px; margin-left: 70px; padding-top: 43px; }
.d-i { width: 84px; height: 88px; }
.d-a { width: 75px; height: 50px; margin: 18px 0 0 4px; }
.d-labels { display: grid; grid-template-columns: 194px 192px 199px 190px 194px 198px; margin: 7px 0 0 1px; text-align: center; font-size: 24.500px; font-weight: 700; color: #383838; line-height: 34px; white-space: nowrap; }
.watermark { margin: 106px 32px 0 0; text-align: right; font-size: 27.300px; line-height: 32px; font-style: italic; color: #e6e6e4; font-weight: 500; }

/* status */
.status { height: 31px; display: flex; align-items: center; background: #f1f2f1; border-top: 2px solid #d4d5d4; padding-bottom: 3px; font-size: 15.600px; color: #555; white-space: nowrap; }
.st-text { margin-left: 10px; width: 219px; font-size: 16.800px; }
.st-notes { margin-left: 926px; }
.st-note-text { margin-left: 3px; width: 213px; }
.st-views { margin: -1px 0 0 0; }
.st-zoom { margin-left: 15px; width: 50px; font-size: 16.500px; }
.fitbox { display: flex; flex: none; align-items: center; justify-content: center; width: 18px; height: 20px; border: 1.500px solid #666; }
.arc { position: absolute; left: 20px; bottom: 0; width: 33px; height: 6px; border-top: 1.500px solid #2a6fb5; border-radius: 50% 50% 0 0; }
.ime { position: absolute; left: 1209px; bottom: 0; width: 196px; height: 27px; display: flex; align-items: center; gap: 8px; padding-left: 3px; background: #eaf3fb; border: 1px solid #cfe0ee; border-bottom: 0; }
.ime-zh { color: #2f86d6; font-size: 20px; line-height: 24px; margin-left: -4px; font-weight: 500; }
```
